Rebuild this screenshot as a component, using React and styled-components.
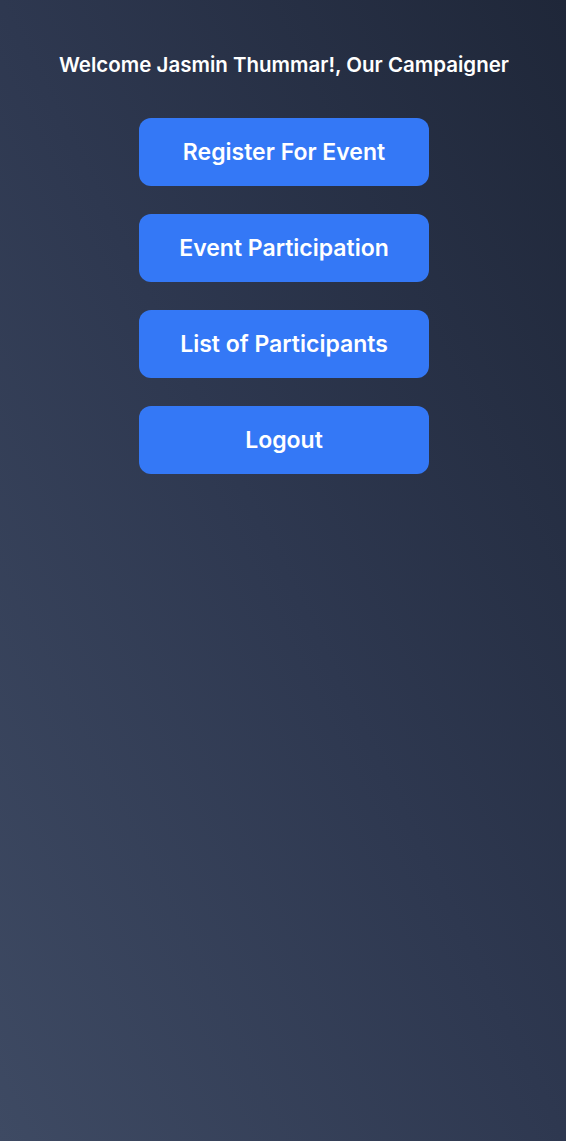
import styled, { createGlobalStyle } from 'styled-components';

const GlobalStyle = createGlobalStyle`
    html, body {
        margin: 0;
        padding: 0;
    }

    body {
        font-family: Inter, "Noto Sans", sans-serif;
    }
`;

const Page = styled.div`
    min-height: 1141px;
    display: flex;
    flex-direction: column;
    align-items: center;
    background: linear-gradient(to top right, #3e4a63 0%, #2e3850 50%, #1f2739 100%);
    padding-top: 52px;
    padding-left: 2px;
    box-sizing: border-box;
`;

const Title = styled.h1`
    margin: 0 0 40px;
    color: #ffffff;
    font-size: 20.5px;
    font-weight: 600;
    line-height: 26px;
    text-align: center;
`;

const Menu = styled.div`
    display: flex;
    flex-direction: column;
    gap: 28px;
`;

const MenuButton = styled.button`
    width: 290px;
    height: 68px;
    border: none;
    border-radius: 12px;
    background-color: #3478f6;
    color: #ffffff;
    font-family: Inter, "Noto Sans", sans-serif;
    font-size: 23px;
    font-weight: 600;
    cursor: pointer;
`;

function App() {
    const items = ['Register For Event', 'Event Participation', 'List of Participants', 'Logout'];

    return (
        <>
            <GlobalStyle />
            <Page>
                <Title>Welcome Jasmin Thummar!, Our Campaigner</Title>
                <Menu>
                    {items.map((label) => (
                        <MenuButton key={label} type="button">
                            {label}
                        </MenuButton>
                    ))}
                </Menu>
            </Page>
        </>
    );
}

export default App;
